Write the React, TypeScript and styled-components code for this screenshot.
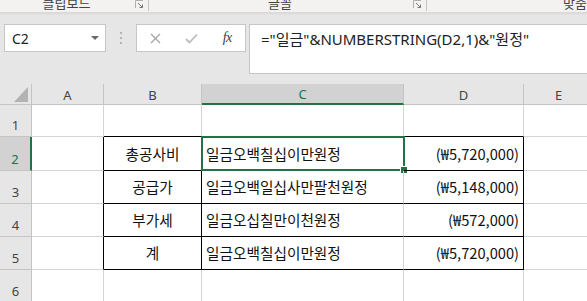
import { FC } from "react";
import styled, { createGlobalStyle } from "styled-components";

const GREEN = "#217346";
const GRID = "#d4d4d4";
const HEAD_LINE = "#c4c4c4";

const GlobalStyle = createGlobalStyle`
  html, body {
    margin: 0;
    padding: 0;
    background: #ffffff;
  }
  * {
    box-sizing: border-box;
  }
`;

const Page = styled.div`
  width: 587px;
  height: 301px;
  overflow: hidden;
  font-family: "Noto Sans", "Noto Sans CJK KR", sans-serif;
  background: #ffffff;
`;

/* ---------- ribbon strip ---------- */

const Ribbon = styled.div`
  height: 12px;
  display: flex;
  background: #f3f2f1;
  overflow: hidden;
`;

const RibbonGroup = styled.div<{ $width?: number; $pad?: number }>`
  display: flex;
  align-items: flex-start;
  height: 12px;
  flex: ${(p) => (p.$width ? `0 0 ${p.$width}px` : "1")};
  padding-left: ${(p) => p.$pad ?? 0}px;
`;

const RibbonLabel = styled.span<{ $left?: boolean }>`
  flex: ${(p) => (p.$left ? "0 0 auto" : "1")};
  text-align: center;
  font-family: "Noto Sans CJK KR", sans-serif;
  font-size: 13px;
  line-height: 16px;
  margin-top: -5px;
  color: #444444;
  white-space: nowrap;
`;

const Launcher = styled.svg`
  flex: 0 0 9px;
  width: 9px;
  height: 9px;
  margin: 0 2px;
`;

const RibbonSep = styled.div`
  width: 1px;
  height: 11px;
  margin-left: 2px;
  background: #c6c6c6;
`;

const RibbonShadow = styled.div`
  height: 3px;
  background: linear-gradient(#d6d6d6, #e4e4e4);
`;

/* ---------- formula bar ---------- */

const FormulaArea = styled.div`
  height: 69px;
  background: #e6e6e6;
  display: flex;
  align-items: flex-start;
  padding: 9px 0 0 4px;
`;

const NameBox = styled.div`
  width: 102px;
  height: 28px;
  background: #ffffff;
  border: 1px solid #c6c6c6;
  display: flex;
  align-items: center;
  justify-content: space-between;
  padding: 0 6px 0 7px;
  font-size: 14px;
  color: #222222;
`;

const DropArrow = styled.span`
  width: 0;
  height: 0;
  border-left: 4px solid transparent;
  border-right: 4px solid transparent;
  border-top: 4px solid #6a6a6a;
`;

const Grip = styled.div`
  width: 30px;
  height: 28px;
  display: flex;
  flex-direction: column;
  align-items: center;
  justify-content: center;
  gap: 3px;
`;

const GripDot = styled.span`
  width: 2px;
  height: 2px;
  background: #b4b4b4;
`;

const ButtonBox = styled.div`
  width: 110px;
  height: 28px;
  background: #ffffff;
  border: 1px solid #c6c6c6;
  display: flex;
  align-items: center;
  padding-left: 1px;
`;

const BarButton = styled.div`
  width: 36px;
  height: 26px;
  display: flex;
  align-items: center;
  justify-content: center;
`;

const Fx = styled.span`
  font-family: "Liberation Serif", serif;
  font-style: italic;
  font-size: 14px;
  color: #3c3c3c;
  letter-spacing: -0.5px;
`;

const FormulaInput = styled.div`
  flex: 1;
  height: 50px;
  margin-left: 3px;
  background: #ffffff;
  border: 1px solid #c6c6c6;
  border-right: none;
  padding: 4px 0 0 11px;
  font-family: "Noto Sans", "Noto Sans CJK KR", sans-serif;
  font-size: 15px;
  line-height: 20px;
  color: #222222;
  white-space: nowrap;
`;

/* ---------- sheet ---------- */

const Sheet = styled.div`
  display: grid;
  grid-template-columns: 32px 72px 98px 202px 120px 70px;
  grid-template-rows: 21px 32px 34px 33px 33px 33px 33px;
`;

const Corner = styled.div`
  position: relative;
  background: #e6e6e6;
  border-right: 1px solid ${HEAD_LINE};
  border-bottom: 1px solid ${HEAD_LINE};
  &::after {
    content: "";
    position: absolute;
    right: 3px;
    bottom: 2px;
    width: 14px;
    height: 15px;
    background: #b3b3b3;
    clip-path: polygon(100% 0, 100% 100%, 0 100%);
  }
`;

const ColHead = styled.div<{ $selected?: boolean }>`
  display: flex;
  align-items: center;
  justify-content: center;
  font-size: 13px;
  padding-top: 1px;
  color: ${(p) => (p.$selected ? GREEN : "#444444")};
  background: ${(p) => (p.$selected ? "#d2d2d2" : "#e6e6e6")};
  border-right: 1px solid ${HEAD_LINE};
  border-bottom: ${(p) => (p.$selected ? `2px solid ${GREEN}` : `1px solid ${HEAD_LINE}`)};
`;

const RowHead = styled.div<{ $selected?: boolean }>`
  display: flex;
  align-items: flex-end;
  justify-content: center;
  padding-bottom: 2px;
  font-size: 13px;
  color: ${(p) => (p.$selected ? GREEN : "#444444")};
  background: ${(p) => (p.$selected ? "#d2d2d2" : "#e6e6e6")};
  border-right: ${(p) => (p.$selected ? `2px solid ${GREEN}` : `1px solid ${HEAD_LINE}`)};
  border-bottom: 1px solid ${HEAD_LINE};
`;

type Align = "left" | "center" | "right";

const Cell = styled.div<{ $align?: Align; $right?: string; $bottom?: string }>`
  position: relative;
  display: flex;
  align-items: center;
  justify-content: ${(p) =>
    p.$align === "center" ? "center" : p.$align === "right" ? "flex-end" : "flex-start"};
  padding: 0 4px 1px 4px;
  border-right: 1px solid ${(p) => p.$right ?? GRID};
  border-bottom: 1px solid ${(p) => p.$bottom ?? GRID};
  font-family: "Noto Sans CJK KR", sans-serif;
  font-size: 14.67px;
  color: #111111;
  white-space: nowrap;
`;

const ActiveFrame = styled.div`
  position: absolute;
  top: -1px;
  left: -1px;
  right: -2px;
  bottom: -1px;
  border: 2px solid ${GREEN};
  pointer-events: none;
`;

const FillHandle = styled.div`
  position: absolute;
  right: -5px;
  bottom: -5px;
  width: 8px;
  height: 8px;
  background: ${GREEN};
  border: 1px solid #ffffff;
`;

interface RowData {
  n: number;
  label?: string;
  text?: string;
  amount?: string;
}

const rows: RowData[] = [
  { n: 1 },
  { n: 2, label: "총공사비", text: "일금오백칠십이만원정", amount: "(₩5,720,000)" },
  { n: 3, label: "공급가", text: "일금오백일십사만팔천원정", amount: "(₩5,148,000)" },
  { n: 4, label: "부가세", text: "일금오십칠만이천원정", amount: "(₩572,000)" },
  { n: 5, label: "계", text: "일금오백칠십이만원정", amount: "(₩5,720,000)" },
  { n: 6 },
];

const columns = ["A", "B", "C", "D", "E"];

const LauncherIcon: FC = () => (
  <Launcher viewBox="0 0 9 9">
    <path d="M0.5 8V0.5H8" fill="none" stroke="#b0b0b0" strokeWidth="1" />
    <path d="M3 3L7.5 7.5M4.5 7.5H7.5V4.5" fill="none" stroke="#7a7a7a" strokeWidth="1" />
  </Launcher>
);

const SheetRow: FC<{ row: RowData }> = ({ row }) => {
  const inTable = row.n >= 2 && row.n <= 5;
  const tableEdge = row.n >= 1 && row.n <= 5 ? "#000000" : GRID;
  const side = inTable ? "#000000" : GRID;
  return (
    <>
      <RowHead $selected={row.n === 2}>{row.n}</RowHead>
      <Cell $right={side} />
      <Cell $align="center" $right={side} $bottom={tableEdge}>
        {row.label}
      </Cell>
      <Cell $bottom={tableEdge}>
        {row.text}
        {row.n === 2 && (
          <ActiveFrame>
            <FillHandle />
          </ActiveFrame>
        )}
      </Cell>
      <Cell $align="right" $right={side} $bottom={tableEdge}>
        {row.amount}
      </Cell>
      <Cell />
    </>
  );
};

const App: FC = () => {
  return (
    <Page>
      <GlobalStyle />
      <Ribbon>
        <RibbonGroup $width={149}>
          <RibbonLabel>클립보드</RibbonLabel>
          <LauncherIcon />
          <RibbonSep />
        </RibbonGroup>
        <RibbonGroup $width={278}>
          <RibbonLabel>글꼴</RibbonLabel>
          <LauncherIcon />
          <RibbonSep />
        </RibbonGroup>
        <RibbonGroup $pad={136}>
          <RibbonLabel $left>맞춤</RibbonLabel>
        </RibbonGroup>
      </Ribbon>
      <RibbonShadow />
      <FormulaArea>
        <NameBox>
          C2
          <DropArrow />
        </NameBox>
        <Grip>
          <GripDot />
          <GripDot />
          <GripDot />
        </Grip>
        <ButtonBox>
          <BarButton>
            <svg width="11" height="11" viewBox="0 0 11 11">
              <path d="M1 1L10 10M10 1L1 10" stroke="#a6a6a6" strokeWidth="1.3" />
            </svg>
          </BarButton>
          <BarButton>
            <svg width="13" height="11" viewBox="0 0 13 11">
              <path d="M1 6L4.5 9.5L12 1.5" fill="none" stroke="#bdbdbd" strokeWidth="1.8" />
            </svg>
          </BarButton>
          <BarButton>
            <Fx>fx</Fx>
          </BarButton>
        </ButtonBox>
        <FormulaInput>="일금"&amp;NUMBERSTRING(D2,1)&amp;"원정"</FormulaInput>
      </FormulaArea>
      <Sheet>
        <Corner />
        {columns.map((c) => (
          <ColHead key={c} $selected={c === "C"}>
            {c}
          </ColHead>
        ))}
        {rows.map((r) => (
          <SheetRow key={r.n} row={r} />
        ))}
      </Sheet>
    </Page>
  );
};

export default App;
